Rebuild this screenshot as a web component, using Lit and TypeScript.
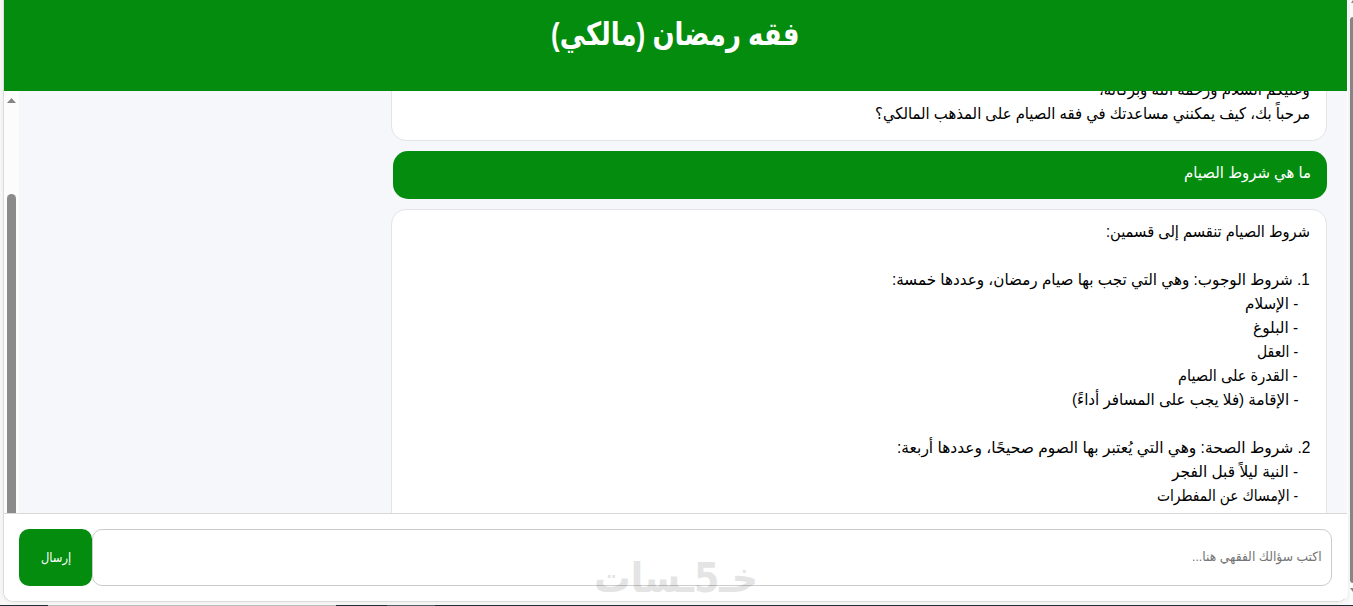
import { LitElement, html, css } from 'lit';
import { customElement, property, query, state } from 'lit/decorators.js';
import { classMap } from 'lit/directives/class-map.js';

interface Line {
  text: string;
  width: number;
  nested?: boolean;
}

interface Message {
  from: 'user' | 'bot';
  lines: Line[];
}

const MESSAGES: Message[] = [
  {
    from: 'bot',
    lines: [
      { text: 'وعليكم السلام ورحمة الله وبركاته،', width: 211 },
      { text: 'مرحباً بك، كيف يمكنني مساعدتك في فقه الصيام على المذهب المالكي؟', width: 435 },
    ],
  },
  {
    from: 'user',
    lines: [{ text: 'ما هي شروط الصيام', width: 127 }],
  },
  {
    from: 'bot',
    lines: [
      { text: 'شروط الصيام تنقسم إلى قسمين:', width: 204 },
      { text: '', width: 0 },
      { text: '1. شروط الوجوب: وهي التي تجب بها صيام رمضان، وعددها خمسة:', width: 418 },
      { text: '- الإسلام', width: 53, nested: true },
      { text: '- البلوغ', width: 45, nested: true },
      { text: '- العقل', width: 41, nested: true },
      { text: '- القدرة على الصيام', width: 120, nested: true },
      { text: '- الإقامة (فلا يجب على المسافر أداءً)', width: 227, nested: true },
      { text: '', width: 0 },
      { text: '2. شروط الصحة: وهي التي يُعتبر بها الصوم صحيحًا، وعددها أربعة:', width: 413 },
      { text: '- النية ليلاً قبل الفجر', width: 126, nested: true },
      { text: '- الإمساك عن المفطرات', width: 141, nested: true },
      { text: '', width: 0 },
    ],
  },
];

// Squeezes a single line of text into a fixed width.
@customElement('fit-text')
export class FitText extends LitElement {
  @property({ type: String })
  text: string = '';

  @property({ type: Number })
  width: number = 0;

  @state()
  scale: number = 1;

  @query('.text')
  textElement!: HTMLElement;

  static override styles = css`
    :host {
      display: block;
      direction: rtl;
      white-space: nowrap;
    }

    .box {
      display: block;
    }

    .text {
      display: inline-block;
      transform-origin: right center;
    }
  `;

  override firstUpdated() {
    const natural = this.textElement.offsetWidth;
    if (natural > 0 && this.width > 0) {
      this.scale = this.width / natural;
    }
  }

  override render() {
    return html`
      <span class="box" style="width: ${this.width}px">
        <span class="text" style="transform: scaleX(${this.scale})">${this.text}</span>
      </span>
    `;
  }
}

@customElement('chat-message')
export class ChatMessage extends LitElement {
  @property({ attribute: false })
  message: Message = { from: 'bot', lines: [] };

  static override styles = css`
    :host {
      display: block;
    }

    .bubble {
      box-sizing: border-box;
      width: 936px;
      padding: 12px 16px;
      border: 1px solid #e4e4e6;
      border-radius: 15px;
      background: #fff;
      color: #000;
    }

    .bubble.user {
      width: 934px;
      border: none;
      background: #048c0e;
      color: #fff;
    }

    .line {
      height: 24px;
      line-height: 20px;
    }

    .nested {
      padding-right: 12px;
    }
  `;

  override render() {
    return html`
      <div class=${classMap({ bubble: true, user: this.message.from === 'user' })}>
        ${this.message.lines.map((line) => html`
          <div class=${classMap({ line: true, nested: !!line.nested })}>
            ${line.text ? html`<fit-text .text=${line.text} .width=${line.width}></fit-text>` : ''}
          </div>
        `)}
      </div>
    `;
  }
}

@customElement('app-root')
export class AppRoot extends LitElement {
  static override styles = css`
    :host {
      display: grid;
      grid-template-columns: 3px 1fr 3px;
      grid-template-rows: 605px 1px;
      position: relative;
      width: 1353px;
      height: 606px;
      overflow: hidden;
      background: #f8f8f8;
      font-family: 'Liberation Sans', 'DejaVu Sans', sans-serif;
      font-size: 16px;
    }

    .app {
      grid-column: 2;
      display: flex;
      flex-direction: column;
      box-sizing: border-box;
      height: 602px;
      margin-right: 2px;
      border: 1px solid #dcdcdc;
      border-top: none;
      border-right-color: #fff;
      border-radius: 0 0 10px 10px;
      background: #fff;
      box-shadow: 0 0 5px rgba(0, 0, 0, 0.06);
      overflow: hidden;
    }

    header {
      display: flex;
      justify-content: center;
      flex: none;
      box-sizing: border-box;
      height: 91px;
      padding-top: 11px;
      background: #048c0e;
      color: #fff;
      font-size: 32px;
      font-weight: bold;
      line-height: 46px;
    }

    .chat {
      display: flex;
      flex: none;
      height: 422px;
      background: #f5f7fb;
      overflow: hidden;
    }

    .scrollbar {
      display: flex;
      flex-direction: column;
      align-items: center;
      width: 15px;
      background: #fcfcfc;
    }

    .scrollbar svg {
      flex: none;
      margin: 7px 0 0;
    }

    .thumb {
      width: 9px;
      height: 340px;
      margin-top: 91px;
      flex: none;
      border-radius: 5px 5px 0 0;
      background: #8b8b8b;
    }

    .messages {
      display: flex;
      flex-direction: column;
      flex: 1;
      gap: 10px;
      direction: rtl;
      height: 422px;
      margin-top: -24px;
      padding-right: 20px;
    }

    .composer {
      display: flex;
      flex: none;
      box-sizing: border-box;
      height: 88px;
      padding: 15px;
      border-top: 1px solid #d8d8d8;
      background: #fff;
    }

    button {
      display: flex;
      align-items: center;
      justify-content: center;
      box-sizing: border-box;
      width: 73px;
      height: 57px;
      padding: 0 0 1px 1px;
      border: none;
      border-radius: 10px;
      background: #048c0e;
      color: #fff;
      font-family: inherit;
      font-size: 13px;
    }

    .field {
      display: flex;
      align-items: center;
      flex: 1;
      box-sizing: border-box;
      height: 57px;
      padding: 0 9px 2px;
      border: 1px solid #ccc;
      border-radius: 10px;
      color: #757575;
      direction: rtl;
      font-size: 13px;
    }

    .page-scrollbar {
      grid-column: 3;
      display: flex;
      flex-direction: column;
      background: #fcfcfc;
    }

    .page-scrollbar svg {
      flex: none;
    }

    .page-thumb {
      height: 566px;
      border-radius: 4px 0 0 4px;
      background: #858585;
    }

    .taskbar {
      grid-column: 1 / -1;
      display: grid;
      grid-template-columns: 48px 288px 51px 48px 1fr;
      background: #242c33;
    }

    .taskbar .search {
      grid-column: 2;
      background: #bcbcbc;
    }

    .taskbar .active {
      grid-column: 4;
      background: #555c62;
    }

    .watermark {
      position: absolute;
      left: 590px;
      top: 554px;
      opacity: 0.1;
      font-family: 'DejaVu Sans', sans-serif;
      font-weight: bold;
    }
  `;

  private renderWatermark() {
    return html`
      <svg class="watermark" width="172" height="50" viewBox="0 0 172 50" direction="rtl">
        <text x="168" y="38" font-size="41" textLength="164" lengthAdjust="spacingAndGlyphs">خـ5ـسات</text>
      </svg>
    `;
  }

  override render() {
    return html`
      <main class="app">
        <header>
          <fit-text text="فقه رمضان (مالكي)" width="248"></fit-text>
        </header>
        <section class="chat">
          <div class="scrollbar">
            <svg width="9" height="5" viewBox="0 0 9 5"><path d="M4.5 0 9 5H0z" fill="#858585" /></svg>
            <div class="thumb"></div>
          </div>
          <div class="messages">
            ${MESSAGES.map((message) => html`<chat-message .message=${message}></chat-message>`)}
          </div>
        </section>
        <section class="composer">
          <button><fit-text text="إرسال" width="30"></fit-text></button>
          <div class="field">
            <fit-text text="اكتب سؤالك الفقهي هنا..." width="130"></fit-text>
          </div>
        </section>
      </main>
      <div class="page-scrollbar">
        <svg width="3" height="17" viewBox="0 0 3 17"><path d="M1 3 3 0V3z" fill="#858585" /></svg>
        <div class="page-thumb"></div>
        <svg width="3" height="20" viewBox="0 0 3 20"><path d="M0 5H3V9z" fill="#858585" /></svg>
      </div>
      <div class="taskbar">
        <span class="search"></span>
        <span class="active"></span>
      </div>
      ${this.renderWatermark()}
    `;
  }
}

declare global {
  interface HTMLElementTagNameMap {
    'app-root': AppRoot;
    'chat-message': ChatMessage;
    'fit-text': FitText;
  }
}
